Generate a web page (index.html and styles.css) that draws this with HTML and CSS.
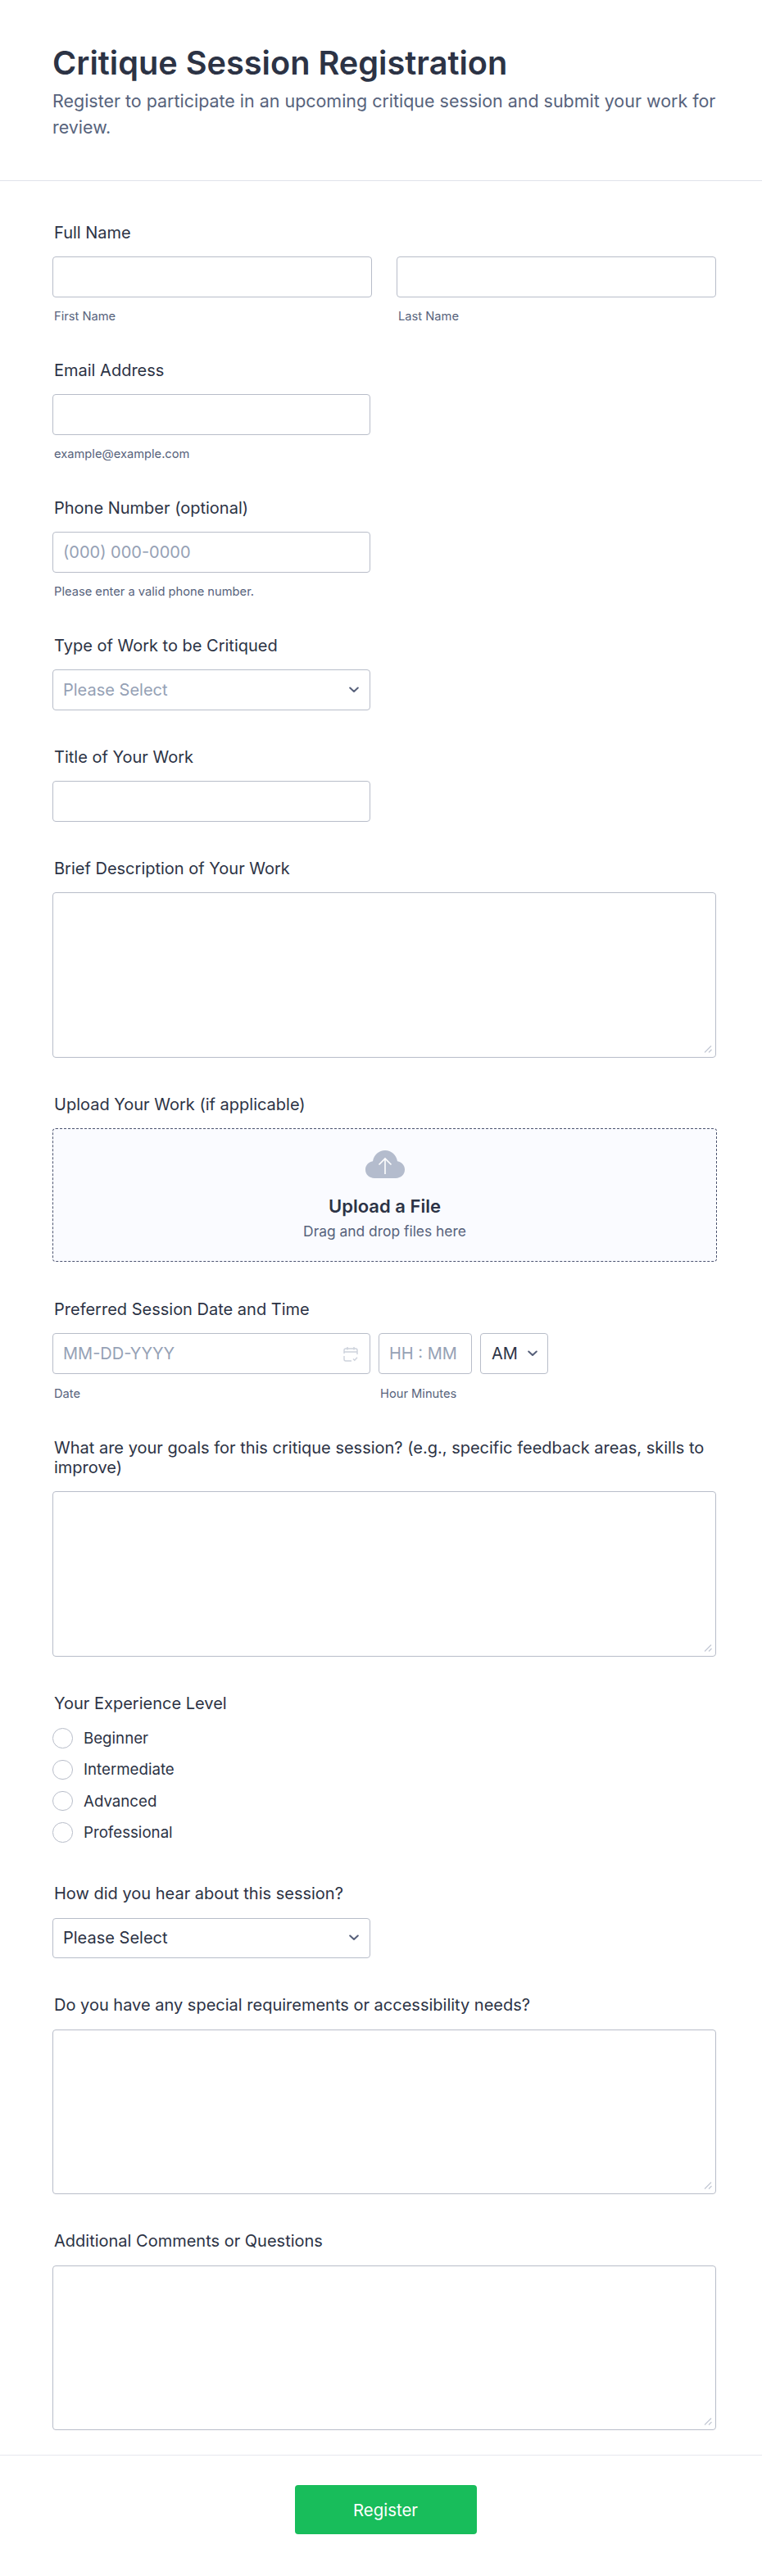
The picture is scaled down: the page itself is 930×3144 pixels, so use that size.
FILE: index.html
```html
<!DOCTYPE html>
<html lang="en">
<head>
<meta charset="utf-8">
<title>Critique Session Registration</title>
<link rel="stylesheet" href="styles.css">
</head>
<body>
<form class="form">
  <header class="header">
    <h1 class="title">Critique Session Registration</h1>
    <p class="subtitle">Register to participate in an upcoming critique session and submit your work for<br>review.</p>
  </header>
  <div class="fields">
    <div class="field">
      <div class="label">Full Name</div>
      <div class="name-row">
        <div class="name-col"><input class="control" type="text"><div class="sub">First Name</div></div>
        <div class="name-col"><input class="control" type="text"><div class="sub">Last Name</div></div>
      </div>
    </div>
    <div class="field">
      <div class="label">Email Address</div>
      <input class="control narrow" type="text">
      <div class="sub">example@example.com</div>
    </div>
    <div class="field">
      <div class="label">Phone Number (optional)</div>
      <input class="control narrow" type="text" placeholder="(000) 000-0000">
      <div class="sub">Please enter a valid phone number.</div>
    </div>
    <div class="field">
      <div class="label">Type of Work to be Critiqued</div>
      <div class="select narrow placeholder">Please Select<svg class="chev" viewBox="0 0 12 8"><path d="M1.200 1.500 6 6l4.800-4.500"/></svg></div>
    </div>
    <div class="field">
      <div class="label">Title of Your Work</div>
      <input class="control narrow" type="text">
    </div>
    <div class="field">
      <div class="label">Brief Description of Your Work</div>
      <div class="area-wrap"><textarea class="area"></textarea><svg class="grip" viewBox="0 0 10 9"><path d="M1 8.500 9 .5M6 8.500 9.500 5"/></svg></div>
    </div>
    <div class="field">
      <div class="label">Upload Your Work (if applicable)</div>
      <div class="upload">
        <svg class="cloud" viewBox="0 0 48 34"><path class="cloud-body" d="M11 34C4.800 34 0 29.600 0 23.600 0 18.300 3.800 14.100 9 13.300 10.200 5.600 16.400 0 24 0s13.800 5.600 15 13.300c5.200.8 9 5 9 10.300C48 29.600 43.200 34 37 34Z"/><path class="cloud-arrow" d="M24 29V10M16.500 17.500 24 10l7.500 7.500"/></svg>
        <div class="upload-title">Upload a File</div>
        <div class="upload-text">Drag and drop files here</div>
      </div>
    </div>
    <div class="field">
      <div class="label">Preferred Session Date and Time</div>
      <div class="date-row">
        <div class="date-col">
          <div class="date-box">
            <span class="ph">MM-DD-YYYY</span>
            <svg class="cal" viewBox="0 0 18 19"><path d="M1 9V5a2 2 0 0 1 2-2h12a2 2 0 0 1 2 2v5M1 7h16M5 1v3.500M13 1v3.500M1 12v4a2 2 0 0 0 2 2h7M12 15.500l1.800 1.800 3.200-3.600"/></svg>
          </div>
          <div class="sub sub-date">Date</div>
        </div>
        <div class="time-col">
          <input class="control" type="text" placeholder="HH : MM">
          <div class="sub sub-date">Hour Minutes</div>
        </div>
        <div class="ampm">AM<svg class="chev" viewBox="0 0 12 8"><path d="M1.200 1.500 6 6l4.800-4.500"/></svg></div>
      </div>
    </div>
    <div class="field">
      <div class="label">What are your goals for this critique session? (e.g., specific feedback areas, skills to improve)</div>
      <div class="area-wrap"><textarea class="area"></textarea><svg class="grip" viewBox="0 0 10 9"><path d="M1 8.500 9 .5M6 8.500 9.500 5"/></svg></div>
    </div>
    <div class="field">
      <div class="label label-radio">Your Experience Level</div>
      <div class="radios">
        <div class="radio"><span class="dot"></span>Beginner</div>
        <div class="radio"><span class="dot"></span>Intermediate</div>
        <div class="radio"><span class="dot"></span>Advanced</div>
        <div class="radio"><span class="dot"></span>Professional</div>
      </div>
    </div>
    <div class="field">
      <div class="label">How did you hear about this session?</div>
      <div class="select narrow">Please Select<svg class="chev" viewBox="0 0 12 8"><path d="M1.200 1.500 6 6l4.800-4.500"/></svg></div>
    </div>
    <div class="field">
      <div class="label">Do you have any special requirements or accessibility needs?</div>
      <div class="area-wrap"><textarea class="area"></textarea><svg class="grip" viewBox="0 0 10 9"><path d="M1 8.500 9 .5M6 8.500 9.500 5"/></svg></div>
    </div>
    <div class="field">
      <div class="label">Additional Comments or Questions</div>
      <div class="area-wrap"><textarea class="area"></textarea><svg class="grip" viewBox="0 0 10 9"><path d="M1 8.500 9 .5M6 8.500 9.500 5"/></svg></div>
    </div>
  </div>
  <footer class="footer">
    <button class="submit" type="button">Register</button>
  </footer>
</form>
</body>
</html>
```
FILE: styles.css
```css
* { box-sizing: border-box; }
html, body { margin: 0; padding: 0; background: #fff; }
body { font-family: Inter, "Liberation Sans", sans-serif; color: #2c3345; }
.form { display: flex; flex-direction: column; width: 930px; }

.header { height: 221px; padding: 49px 40px 0 64px; border-bottom: 1px solid #e0e3ea; }
.title { margin: 0; font-size: 39.7px; line-height: 56px; font-weight: 600; color: #2c3345; }
.subtitle { margin: 2px 0 0; font-size: 21.45px; line-height: 32px; color: #57637c; }

.fields { display: flex; flex-direction: column; gap: 45px; padding: 50.8px 56px 0 64px; }
.label { font-size: 20px; line-height: 24px; font-weight: 400; color: #2c3345; padding-left: 2px; margin-bottom: 17.5px; }
.label-radio { margin-bottom: 18.5px; }

.control, .select, .date-box, .ampm { display: flex; align-items: center; height: 49.5px; background: #fff; border: 1px solid #b8bdc9; border-radius: 4px; font-family: inherit; font-size: 20px; color: #2c3345; }
.control { display: block; width: 100%; padding: 0 12px; outline: none; }
.control::placeholder { color: #95a1b5; opacity: 1; }
.narrow { width: 388px; }
.name-row { display: flex; gap: 30px; }
.name-col { width: 390px; }
.sub { margin-top: 14px; padding-left: 2px; font-size: 14.7px; line-height: 18px; color: #57637c; }
.sub-date { margin-top: 15px; }

.select { justify-content: space-between; padding: 0 13px 0 12px; }
.placeholder { color: #95a1b5; }
.chev { width: 12px; height: 8px; fill: none; stroke: #57607a; stroke-width: 2; stroke-linecap: round; stroke-linejoin: round; flex: none; }

.area-wrap { position: relative; width: 810px; height: 201.5px; }
.area { display: block; width: 100%; height: 100%; background: #fff; border: 1px solid #b8bdc9; border-radius: 4px; font-family: inherit; outline: none; resize: none; }
.grip { position: absolute; right: 5px; bottom: 6px; width: 10px; height: 9px; fill: none; stroke: #c3c8d4; stroke-width: 1.2; }

.upload { display: flex; flex-direction: column; align-items: center; width: 811px; height: 163px; margin-bottom: .5px; padding-top: 26px; background: #fafbff; border: 1px dashed #4c5470; border-radius: 4px; }
.cloud { width: 48px; height: 34px; flex: none; }
.cloud-body { fill: #b4bccd; }
.cloud-arrow { fill: none; stroke: #fff; stroke-width: 1.6; }
.upload-title { margin-top: 20px; font-size: 22px; line-height: 28px; font-weight: 600; color: #2c3345; }
.upload-text { margin-top: 6px; font-size: 17.4px; line-height: 22px; color: #57637c; }

.date-row { display: flex; gap: 10px; align-items: flex-start; }
.date-col { width: 388px; }
.date-box { justify-content: space-between; padding: 0 14px 0 12px; }
.ph { color: #95a1b5; }
.cal { width: 18px; height: 19px; fill: none; stroke: #cdd2dc; stroke-width: 1.4; flex: none; }
.time-col { width: 114px; }
.ampm { width: 83px; justify-content: space-between; padding: 0 12px 0 13px; }

.radios { display: flex; flex-direction: column; gap: 13.8px; margin-bottom: 5.5px; }
.radio { display: flex; align-items: center; gap: 13.5px; height: 24.5px; font-size: 18.7px; color: #2c3345; }
.dot { width: 24.5px; height: 24.5px; border: 1px solid #b8bdc9; border-radius: 50%; background: #fff; flex: none; }

.footer { display: flex; justify-content: center; margin-top: 30px; height: 146px; padding: 36px 0 0 11px; border-top: 1px solid #e6e8ef; }
.submit { width: 222px; height: 60px; background: #18bd5b; color: #fff; border: 0; border-radius: 4px; font-family: inherit; font-size: 20.4px; font-weight: 400; }
```
